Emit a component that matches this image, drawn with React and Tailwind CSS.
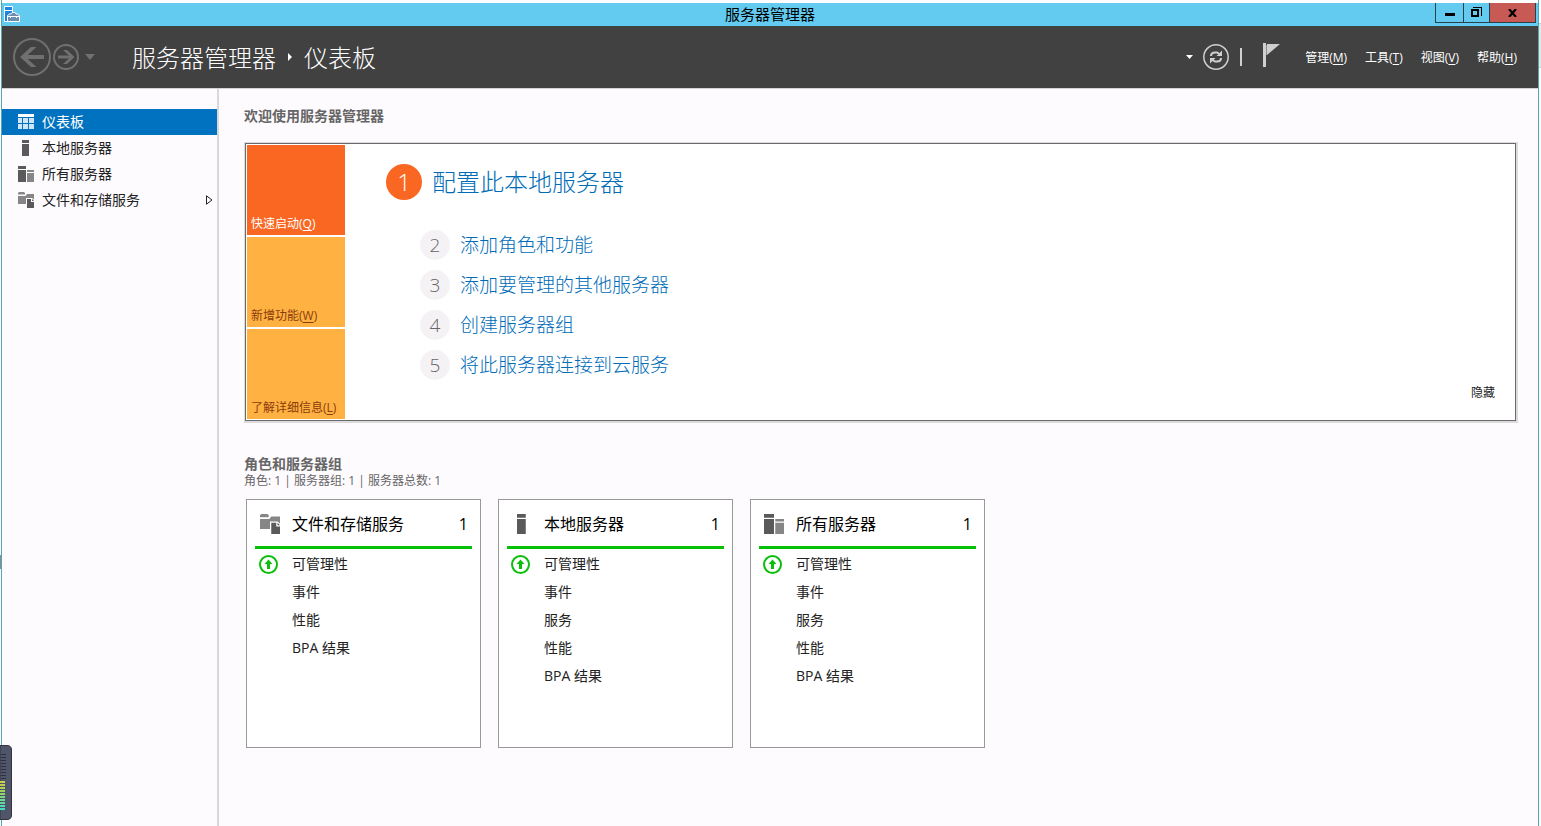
import { useState } from 'react';

const menus = [
  { label: '管理', hotkey: 'M' },
  { label: '工具', hotkey: 'T' },
  { label: '视图', hotkey: 'V' },
  { label: '帮助', hotkey: 'H' },
]

const tiles = [
  { label: '快速启动', hotkey: 'Q', style: 'bg-[#fa6722] text-white' },
  { label: '新增功能', hotkey: 'W', style: 'bg-[#ffb142] text-[#8a3c0c]' },
  { label: '了解详细信息', hotkey: 'L', style: 'bg-[#ffb142] text-[#8a3c0c]' },
]

const steps = ['添加角色和功能', '添加要管理的其他服务器', '创建服务器组', '将此服务器连接到云服务']

const groups = [
  { title: '文件和存储服务', icon: StorageIcon, rows: ['可管理性', '事件', '性能', 'BPA 结果'] },
  { title: '本地服务器', icon: ServerIcon, rows: ['可管理性', '事件', '服务', '性能', 'BPA 结果'] },
  { title: '所有服务器', icon: ServersIcon, rows: ['可管理性', '事件', '服务', '性能', 'BPA 结果'] },
]

const navItems = [
  { label: '仪表板', icon: DashboardIcon },
  { label: '本地服务器', icon: ServerIcon },
  { label: '所有服务器', icon: ServersIcon },
  { label: '文件和存储服务', icon: StorageIcon, more: true },
]

function DashboardIcon({ className }) {
  return (
    <svg className={className} viewBox="0 0 16 16" shapeRendering="crispEdges">
      <path fill="#fff" d="M0 0h16v3H0z" />
      <path fill="#cfe5f6" d="M0 4h4v5H0zM5 4h5v5H5zM11 4h5v5h-5zM0 10h4v5H0zM5 10h5v5H5zM11 10h5v5h-5z" />
    </svg>
  )
}

function ServerIcon({ className }) {
  return (
    <svg className={className} viewBox="0 0 16 16">
      <path fill="#5a5a5a" d="M4 0h7v3H4zM4 4h7v12H4z" />
    </svg>
  )
}

function ServersIcon({ className }) {
  return (
    <svg className={className} viewBox="0 0 16 16">
      <path fill="#5a5a5a" d="M0 0h8v3H0zM0 4h8v12H0z" />
      <path fill="#868686" d="M9 4h7v2H9zM9 7h7v9H9z" />
    </svg>
  )
}

function StorageIcon({ className }) {
  return (
    <svg className={className} viewBox="0 0 16 16">
      <path fill="#868686" d="M1 0h5l1 1v1.500H0V1zM0 4h7.500l1.500-2h7v5.500L14 6H8v6H0z" />
      <path fill="#5a5a5a" d="M9 7h4v3h3v6H9z" />
      <path fill="#5a5a5a" d="M14 7l2 2h-2z" />
    </svg>
  )
}

function HealthIcon() {
  return (
    <svg className="h-[19px] w-[19px]" viewBox="0 0 19 19">
      <circle cx="9.500" cy="9.500" r="8.500" fill="#fff" stroke="#0abf0a" strokeWidth="2" />
      <path fill="#0abf0a" d="M9.500 4.500l4 4.500h-2.500v5H8V9H5.500z" />
    </svg>
  )
}

function Hotkey({ label, hotkey }) {
  return <>{label}(<span className="underline underline-offset-2">{hotkey}</span>)</>
}

function TitleBar() {
  return (
    <div className="grid h-[23px] grid-cols-[1fr_auto_1fr] bg-[#63cbf0]">
      <svg className="mt-[3px] ml-0.5 h-4 w-4" viewBox="0 0 16 16">
        <path fill="#1e84dc" stroke="#fff" d="M.5.500h8v15h-8z" />
        <path stroke="#fff" d="M1 4.500h7" />
        <path fill="#6d8fae" stroke="#fff" d="M3.500 15.500v-6l2-1.500h1.500l1-1.500h3l1 1.500h1.500l2 1.500v6z" />
        <path stroke="#fff" fill="none" d="M4 10.500h11M6.500 10v2M12.500 10v2" />
      </svg>
      <h1 className="text-[15px] leading-[23px] text-black">服务器管理器</h1>
      <div className="mr-0.5 flex h-5 justify-self-end border-x border-b border-[#27414d]">
        <button aria-label="最小化" className="flex w-[27px] items-center justify-center">
          <svg className="mt-1 h-[3px] w-[10px]" viewBox="0 0 10 3"><path d="M0 0h10v3H0z" /></svg>
        </button>
        <button aria-label="还原" className="flex w-[27px] items-center justify-center border-x border-[#27414d]">
          <svg className="h-[11px] w-[11px]" viewBox="0 0 11 11" fill="none" stroke="#000" shapeRendering="crispEdges">
            <path strokeWidth="2" d="M1 3h6v6H1z" />
            <path d="M2 .5h8.500V9" />
          </svg>
        </button>
        <button aria-label="关闭" className="flex w-[45px] items-center justify-center bg-[#c75a54]">
          <svg className="h-2 w-[9px]" viewBox="0 0 9 8"><path stroke="#000" strokeWidth="2.200" d="M1 0l7 8M8 0L1 8" /></svg>
        </button>
      </div>
    </div>
  )
}

function Header() {
  return (
    <header className="flex h-[63px] items-center border-b border-[#d4d2d4] bg-[#414141] pr-[21px] pl-[11px] text-white">
      <button aria-label="后退">
        <svg className="h-[38px] w-[38px]" viewBox="0 0 38 38" fill="none" stroke="#707070">
          <circle cx="19" cy="19" r="18" strokeWidth="2" />
          <path strokeWidth="4" d="M31 19H11" />
          <path fill="#707070" stroke="none" d="M7 19L18 9h5.500L12.500 19l11 10H18z" />
        </svg>
      </button>
      <button aria-label="前进" className="ml-0.5">
        <svg className="h-[26px] w-[26px]" viewBox="0 0 26 26" fill="none" stroke="#707070">
          <circle cx="13" cy="13" r="12" strokeWidth="2" />
          <path strokeWidth="3" d="M5 13h14" />
          <path fill="#707070" stroke="none" d="M21.500 13L14 6h-4l7.500 7-7.500 7h4z" />
        </svg>
      </button>
      <button aria-label="历史记录" className="ml-1.5">
        <svg className="h-1.5 w-[10px]" viewBox="0 0 10 6"><path fill="#707070" d="M0 0h10L5 6z" /></svg>
      </button>
      <nav className="ml-[37px] flex items-center pt-0.5 text-2xl font-light">
        <a href="#manager">服务器管理器</a>
        <svg className="mx-3 mb-0.5 h-2 w-1" viewBox="0 0 4 8"><path fill="#fff" d="M0 0l4 4-4 4z" /></svg>
        <a href="#dashboard">仪表板</a>
      </nav>
      <div className="ml-auto flex items-center">
        <button aria-label="刷新选项">
          <svg className="h-1 w-[7px]" viewBox="0 0 7 4"><path fill="#fff" d="M0 0h7L3.500 4z" /></svg>
        </button>
        <button aria-label="刷新" className="ml-2.5">
          <svg className="h-[26px] w-[26px]" viewBox="0 0 26 26" fill="none" stroke="#cfcfcf">
            <circle cx="13" cy="13" r="12.200" strokeWidth="1.500" />
            <path strokeWidth="2" d="M8 12c0-2.500 2-3.500 4-3.500h2l2.500 1.500M18 14c0 2.500-2 3.500-4 3.500h-2L9.500 16" />
            <path fill="#cfcfcf" stroke="none" d="M19 6.500V12h-5.500zM7 19.500V14h5.500z" />
          </svg>
        </button>
        <span className="ml-[11px] h-[18px] w-0.5 bg-[#cfcfcf]" />
        <button aria-label="通知" className="mr-[25px] ml-[21px]">
          <svg className="mb-1 h-6 w-[17px]" viewBox="0 0 17 24">
            <path fill="#cfcfcf" d="M0 0h3v24H0zM4 1h13L4 12z" />
            <path fill="#8a8a8a" d="M3 2h1v10H3z" />
          </svg>
        </button>
        <div className="flex gap-[18px] pt-0.5 text-xs">
          {menus.map((item) => (
            <button key={item.label}><Hotkey {...item} /></button>
          ))}
        </div>
      </div>
    </header>
  )
}

function Sidebar() {
  const [active, setActive] = useState('仪表板')

  return (
    <nav className="w-[217px] shrink-0 border-r-2 border-[#d9d7d9] pt-5">
      {navItems.map(({ label, icon: Icon, more }) => (
        <button
          key={label}
          onClick={() => setActive(label)}
          className={`${active === label ? 'bg-[#0072bf] text-white' : 'text-[#222]'} flex h-[26px] w-full items-center gap-2 pr-1 pl-4 text-sm`}
        >
          <Icon className="h-4 w-4" />
          {label}
          {more && (
            <svg className="ml-auto h-[10px] w-[7px]" viewBox="0 0 7 10" fill="none" stroke="#222">
              <path d="M.5.800L6 5 .5 9.200z" />
            </svg>
          )}
        </button>
      ))}
    </nav>
  )
}

function Welcome() {
  return (
    <section className="mt-4 bg-[#dcdadc] pt-px pr-0.5 pb-0.5 pl-px">
      <div className="flex border border-[#6b6b6b] bg-white p-px">
        <div className="flex w-[98px] shrink-0 flex-col gap-0.5">
          {tiles.map(({ label, hotkey, style }) => (
            <button key={label} className={`${style} flex h-[90px] items-end pb-[3px] pl-1 text-xs whitespace-nowrap`}>
              <span><Hotkey label={label} hotkey={hotkey} /></span>
            </button>
          ))}
        </div>
        <div className="flex-1 pt-[19px] pl-[41px]">
          <a href="#configure" className="flex items-center gap-2.5 text-2xl font-light text-[#006cb8]">
            <span className="flex h-9 w-9 items-center justify-center rounded-full bg-[#fa6722] text-white">1</span>
            配置此本地服务器
          </a>
          <ol className="mt-[30px] flex flex-col gap-2.5 pl-[34px]">
            {steps.map((step, i) => (
              <li key={step}>
                <a href={`#step-${i + 2}`} className="flex items-center gap-2.5 text-[19px] leading-[30px] font-light text-[#006cb8]">
                  <span className="flex h-[30px] w-[30px] items-center justify-center rounded-full bg-[#f5f2f6] text-[#666]">{i + 2}</span>
                  {step}
                </a>
              </li>
            ))}
          </ol>
        </div>
        <button className="mr-[19px] mb-[18px] self-end text-xs text-[#222]">隐藏</button>
      </div>
    </section>
  )
}

function GroupCard({ title, icon: Icon, rows }) {
  return (
    <article className="min-h-[249px] w-[235px] border border-[#999] bg-white px-2">
      <div className="flex h-[49px] items-center border-b-3 border-[#05c105] pt-0.5 pr-1 pl-[5px] text-base text-black">
        <Icon className="mr-3 h-5 w-5" />
        <h3>{title}</h3>
        <span className="ml-auto">1</span>
      </div>
      <ul className="pt-px text-sm text-[#222]">
        {rows.map((row, i) => (
          <li key={row} className="flex h-7 items-center pl-1">
            <span className="w-[33px]">{i === 0 && <HealthIcon />}</span>
            <a href="#detail">{row}</a>
          </li>
        ))}
      </ul>
    </article>
  )
}

// audio level widget docked at the left screen edge
function LevelMeter() {
  return (
    <svg className="absolute bottom-1.5 left-0 h-[75px] w-3" viewBox="0 0 12 75">
      <path fill="#50566a" stroke="#32333f" d="M0 .5h7q4.500 0 4.500 4.500v65q0 4.500-4.500 4.500H0z" />
      {Array.from({ length: 9 }, (_, i) => (
        <path key={i} stroke="#30313d" d={`M1 ${9.5 + i * 3}h5`} />
      ))}
      {['#c6d04e', '#c0d04e', '#b0d058', '#a0d060', '#90d470', '#80d480', '#70d890', '#60d8a0', '#50dcb0', '#40dcc0'].map((color, i) => (
        <path key={color} stroke={color} strokeWidth="2" d={`M0 ${37 + i * 3}h5`} />
      ))}
    </svg>
  )
}

export default function App() {
  return (
    <div className="relative flex min-h-screen bg-white pr-0.5 pl-px font-['Open_Sans','Noto_Sans_CJK_SC',sans-serif]">
      <div className="flex flex-1 flex-col border-x border-[#4fa9b3] pt-[3px]">
        <TitleBar />
        <Header />
        <div className="flex flex-1 bg-[#fefbff]">
          <Sidebar />
          <main className="flex-1 pt-[17px] pr-5 pl-[25px]">
            <h2 className="text-sm font-bold text-[#666]">欢迎使用服务器管理器</h2>
            <Welcome />
            <h2 className="mt-[31px] text-sm font-bold text-[#666]">角色和服务器组</h2>
            <p className="mt-px text-xs leading-3 text-[#666]">角色: 1 | 服务器组: 1 | 服务器总数: 1</p>
            <div className="mt-3 ml-0.5 flex flex-wrap gap-[17px]">
              {groups.map((group) => (
                <GroupCard key={group.title} {...group} />
              ))}
            </div>
          </main>
        </div>
      </div>
      <span className="absolute bottom-[257px] left-0 h-3.5 w-px bg-[#8c8c8c]" />
      <span className="absolute top-[23px] right-0 h-[45px] w-0.5 border-y border-[#ccc] bg-[#e6e6e6]" />
      <LevelMeter />
    </div>
  )
}
